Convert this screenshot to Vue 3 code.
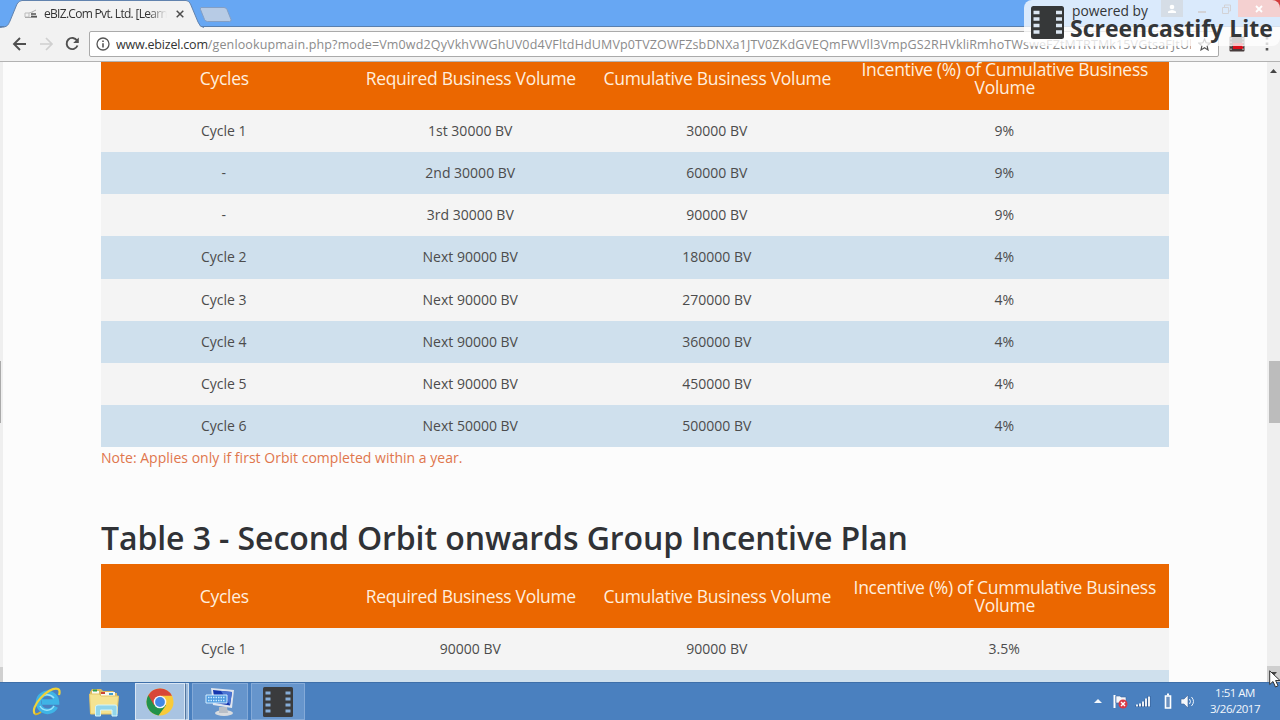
<template>
  <div class="screen">
    <!-- tab strip -->
    <div class="tab-strip">
      <svg class="tab-shape" width="232" height="28" viewBox="0 0 232 28">
        <path d="M0 27.5 C8 27 8 25 10 21 L17 4 Q19 .5 22 .5 H186 Q189 .5 190.500 4 L198 22 Q200 27.500 204 27.500" fill="#f2f2f2" stroke="#6283ae" />
        <path d="M201 7.500 h23 q2 0 3 2 l4 10 q.5 2-1.500 2 h-22 q-2 0-3-2 l-4-10 q-.5-2 .5-2z" fill="#b7cbe5" stroke="#839fc5" />
      </svg>
      <div class="tab">
        <svg width="14" height="12" viewBox="0 0 14 12">
          <path d="M1 5 h4 v4 h-4z M5 5 l3-1 v5" fill="none" stroke="#bbb" />
          <path d="M1 9.500 h12" stroke="#aaa" />
          <path d="M7 6 h5 M7 8.500 h6" stroke="#555" stroke-width="1.300" />
          <path d="M8 4 l4-2" stroke="#aaa" />
        </svg>
        <span class="tab-title">eBIZ.Com Pvt. Ltd. [Learn</span>
        <svg class="tab-close" width="8" height="8" viewBox="0 0 8 8">
          <path d="M.7.7 L7.300 7.300 M7.300.7 L.7 7.300" stroke="#4c4c4c" stroke-width="1.500" />
        </svg>
      </div>
      <div class="window-buttons">
        <span class="user"><svg width="10" height="10" viewBox="0 0 10 10"><circle cx="5" cy="3" r="2.300" fill="#fff" /><path d="M1 9 V7.500 Q5 4.500 9 7.500 V9z" fill="#fff" /></svg></span>
        <span class="win"><svg width="8" height="10" viewBox="0 0 8 10"><path d="M0 8 h8" stroke="#445" stroke-width="2" /></svg></span>
        <span class="win"><svg width="9" height="10" viewBox="0 0 9 10"><path d="M2.500 3 V1 H8.500 V7 H7 M.5 3.500 h6 v6 h-6z" fill="none" stroke="#445" /></svg></span>
        <span class="close"><svg width="8" height="8" viewBox="0 0 8 8"><path d="M1 1 L7 7 M7 1 L1 7" stroke="#fff" stroke-width="1.800" /></svg></span>
      </div>
    </div>

    <!-- toolbar -->
    <div class="toolbar">
      <svg class="nav" width="68" height="16" viewBox="0 0 68 16">
        <path d="M14 8 H2 M8 2 L2 8 L8 14" fill="none" stroke="#505050" stroke-width="1.900" />
        <path d="M28 8 H40 M34 2 L40 8 L34 14" fill="none" stroke="#d0d0d0" stroke-width="1.700" />
        <path d="M65 4.500 A5.600 5.600 0 1 0 65.500 9.500" fill="none" stroke="#505050" stroke-width="1.900" />
        <path d="M66.800 1.500 V7 H61.200z" fill="#505050" />
      </svg>
      <div class="omnibox">
        <svg width="14" height="14" viewBox="0 0 14 14">
          <circle cx="7" cy="7" r="6" fill="none" stroke="#555" stroke-width="1.300" />
          <path d="M7 6.200 V10.500 M7 3.500 V5" stroke="#555" stroke-width="1.600" />
        </svg>
        <span class="url"><b>www.ebizel.com</b>/genlookupmain.php?mode=Vm0wd2QyVkhVWGhUV0d4VFltdHdUMVp0TVZOWFZsbDNXa1JTV0ZKdGVEQmFWVll3VmpGS2RHVkliRmhoTWsweFZtMTRTMk15VGtsaFJtUl</span>
        <svg class="star" width="13" height="13" viewBox="0 0 13 13">
          <path d="M6.500 1 L8.100 4.800 L12.200 5.100 L9.100 7.800 L10 11.900 L6.500 9.700 L3 11.900 L3.900 7.800 L.8 5.100 L4.900 4.800z" fill="none" stroke="#555" stroke-width="1.200" />
        </svg>
      </div>
      <svg class="extension" width="16" height="16" viewBox="0 0 16 16">
        <rect width="15" height="15" x=".5" y=".5" rx="1" fill="#483c3c" />
        <rect x="4" y="7" width="10" height="6" fill="#d90c18" />
        <path d="M2 2 V14 M14 2 V14" stroke="#ddd" stroke-dasharray="1.500 2" />
      </svg>
      <svg class="menu" width="4" height="16" viewBox="0 0 4 16">
        <path d="M.7 1 h2.600 v2.600 h-2.600z M.7 6.500 h2.600 v2.600 h-2.600z M.7 12 h2.600 v2.600 h-2.600z" fill="#555" />
      </svg>
    </div>

    <!-- page -->
    <div class="page">
      <div class="left-edge"><i class="edge-thumb"></i><i class="edge-end"></i></div>
      <div class="content">
        <table class="plan plan-first">
          <thead>
            <tr>
              <th>Cycles</th>
              <th>Required Business Volume</th>
              <th>Cumulative Business Volume</th>
              <th>Incentive (%) of Cumulative Business<br>Volume</th>
            </tr>
          </thead>
          <tbody>
            <tr v-for="(row, i) in firstOrbit" :key="i">
              <td v-for="(cell, j) in row" :key="j">{{ cell }}</td>
            </tr>
          </tbody>
        </table>
        <p class="note">Note: Applies only if first Orbit completed within a year.</p>
        <h2>Table 3 - Second Orbit onwards Group Incentive Plan</h2>
        <table class="plan">
          <thead>
            <tr>
              <th>Cycles</th>
              <th>Required Business Volume</th>
              <th>Cumulative Business Volume</th>
              <th>Incentive (%) of Cummulative Business<br>Volume</th>
            </tr>
          </thead>
          <tbody>
            <tr v-for="(row, i) in secondOrbit" :key="i">
              <td v-for="(cell, j) in row" :key="j">{{ cell }}</td>
            </tr>
          </tbody>
        </table>
      </div>
      <div class="scrollbar">
        <svg width="7" height="4" viewBox="0 0 7 4"><path d="M0 4 L3.500 0 L7 4z" fill="#444" /></svg>
        <i class="thumb"></i>
        <span class="scroll-end"><svg width="7" height="4" viewBox="0 0 7 4"><path d="M0 0 L3.500 4 L7 0z" fill="#444" /></svg></span>
      </div>
    </div>

    <!-- taskbar -->
    <div class="taskbar">
      <span class="task plain">
        <svg width="32" height="32" viewBox="0 0 32 32">
          <path d="M24.500 20.500 A9 9 0 1 1 25.500 16 H11" fill="none" stroke="#3fb4e6" stroke-width="5.500" />
          <path d="M23 20 A8 8 0 0 1 9 20 M9 13 A8.500 8.500 0 0 1 23 12" fill="none" stroke="#9fe4fa" stroke-width="1.500" />
          <path d="M4 28 C-2 22 17 0 27 3 C29 4 29 6 28 9" fill="none" stroke="#f0d238" stroke-width="2.200" />
          <path d="M4 28 Q6 29 10 26" fill="none" stroke="#d9b528" stroke-width="2" />
        </svg>
      </span>
      <span class="task plain">
        <svg width="32" height="30" viewBox="0 0 32 30">
          <path d="M2 5 V26 H29 V6 H27 L25 4 H15 L13 2 H4z" fill="#dcb95e" />
          <path d="M4 4 h7 v4 h-7z M13 5 h14 v4 h-14z" fill="#f9f9f0" />
          <path d="M5 3.500 h4" stroke="#2a9d46" stroke-width="2" />
          <path d="M13 6 h4" stroke="#cb4436" stroke-width="2" />
          <path d="M21 7 h4" stroke="#3f9ed0" stroke-width="2" />
          <path d="M1.500 7 H11 L13 9 H30.500 L29 27 H2.500z" fill="#f5e391" stroke="#e4c568" />
          <path d="M7.500 29 V20 Q7.500 18 10 18 H27 Q29 18 29 20 V29 H24 V23 H12.500 V29z" fill="#91d5eb" stroke="#d5f5fb" />
        </svg>
      </span>
      <span class="task active">
        <svg width="28" height="28" viewBox="0 0 28 28">
          <circle cx="14" cy="14" r="13.500" fill="#f8ca3a" />
          <path d="M14 14 L2.300 7.200 A13.500 13.500 0 0 0 12.500 27.400 L19.900 17.400z" fill="#22924b" />
          <path d="M14 14 L8.100 17.300 L2.300 7.200 A13.500 13.500 0 0 1 25.900 7.700 H14z" fill="#d84738" />
          <circle cx="14" cy="14" r="6.300" fill="#f5f7fa" />
          <circle cx="14" cy="14" r="4.900" fill="#4388e6" />
        </svg>
      </span>
      <i class="stack"></i>
      <span class="task open">
        <svg width="30" height="30" viewBox="0 0 30 30">
          <ellipse cx="19" cy="26" rx="9" ry="3" fill="#d9dcdf" />
          <path d="M14 20 h8 l1 6 h-9z" fill="#b9bfc7" />
          <path d="M6 1 L29 3 L27 21 L8 18z" fill="#dfe5ee" />
          <path d="M8 3 L27 5 L25 18.500 L10 16z" fill="#1537ae" />
          <path d="M16 4 L27 5 L25 18z" fill="#4b75d3" />
          <path d="M1 8 H22 V16 H1z" fill="#4d9ae0" stroke="#d3edff" />
          <path d="M3 10.500 H20 M3 13.500 H20" stroke="#c9eaff" stroke-width="1.400" stroke-dasharray="1.500 1" />
        </svg>
      </span>
      <span class="task open film">
        <svg width="30" height="30" viewBox="0 0 30 30">
          <rect width="30" height="30" rx="1.500" fill="#3a3b3d" />
          <path d="M2.500 6 h5 M2.500 12 h5 M2.500 18 h5 M2.500 24 h5 M22.500 6 h5 M22.500 12 h5 M22.500 18 h5 M22.500 24 h5" stroke="#86add8" stroke-width="3" />
        </svg>
      </span>
      <div class="tray">
        <svg width="102" height="18" viewBox="0 0 102 18">
          <path d="M0 11 L4 7 L8 11z" fill="#f4f8fc" />
          <path d="M20.500 3 V16" stroke="#fff" stroke-width="2" />
          <path d="M22 4 h4 l1 1 h5 v7 h-5 l-1-1 h-4z" fill="#f5f7fa" stroke="#40659b" stroke-width=".6" />
          <circle cx="29" cy="12" r="4.500" fill="#da3945" />
          <path d="M27 10 l4 4 M31 10 l-4 4" stroke="#fff" stroke-width="1.400" />
          <path d="M43 15 v-2 M46 15 v-3 M49 15 v-5 M52 15 v-8 M55 15 v-11" stroke="#315b94" stroke-width="3" />
          <path d="M43 14.500 v-2 M46 14.500 v-3 M49 14.500 v-5 M52 14.500 v-8 M55 14.500 v-10" stroke="#fff" stroke-width="1.800" />
          <path d="M71.500 4 h5 v12 h-5z" fill="#6c91bf" stroke="#fff" stroke-width="1.600" />
          <path d="M73 2.500 h2" stroke="#fff" stroke-width="2" />
          <path d="M87 7 h3 l4-4 v13 l-4-4 h-3z" fill="#f6f8fb" stroke="#3c6297" stroke-width=".6" />
          <path d="M95.500 7 q2 2.500 0 5 M97.500 5 q4 4.500 0 9" fill="none" stroke="#eef4fb" />
        </svg>
        <div class="clock"><span>1:51 AM</span><span>3/26/2017</span></div>
      </div>
    </div>

    <div class="watermark">
      <svg width="33" height="33" viewBox="0 0 33 33">
        <rect width="33" height="33" rx="2.500" fill="#363839" />
        <path d="M2.500 6.500 h6 M2.500 13 h6 M2.500 19.500 h6 M2.500 26 h6 M25 6.500 h6 M25 13 h6 M25 19.500 h6 M25 26 h6" stroke="#dbe6f2" stroke-width="3.500" />
      </svg>
      <div class="mark-text">
        <span class="powered">powered by</span>
        <span class="brand">Screencastify Lite</span>
      </div>
    </div>

    <svg class="cursor" width="13" height="18" viewBox="0 0 13 18">
      <path d="M.7.8 V14.500 L4 11.500 L6.500 17 L9 15.800 L6.600 10.500 H11z" fill="#fff" stroke="#333" />
    </svg>
  </div>
</template>

<script setup>
const firstOrbit = [
  ['Cycle 1', '1st 30000 BV', '30000 BV', '9%'],
  ['-', '2nd 30000 BV', '60000 BV', '9%'],
  ['-', '3rd 30000 BV', '90000 BV', '9%'],
  ['Cycle 2', 'Next 90000 BV', '180000 BV', '4%'],
  ['Cycle 3', 'Next 90000 BV', '270000 BV', '4%'],
  ['Cycle 4', 'Next 90000 BV', '360000 BV', '4%'],
  ['Cycle 5', 'Next 90000 BV', '450000 BV', '4%'],
  ['Cycle 6', 'Next 50000 BV', '500000 BV', '4%']
]

const secondOrbit = [
  ['Cycle 1', '90000 BV', '90000 BV', '3.5%'],
  ['', '', '', '']
]
</script>

<style>
body {
  margin: 0;
  overflow: hidden;
}
</style>

<style scoped>
.screen {
  position: relative;
  display: flex;
  flex-direction: column;
  width: 1280px;
  height: 720px;
  overflow: hidden;
  background: #fcfcfc;
  font-family: 'Open Sans', 'Noto Sans', sans-serif;
}

svg {
  display: block;
  flex-shrink: 0;
}

/* tab strip */
.tab-strip {
  position: relative;
  display: flex;
  justify-content: space-between;
  height: 27px;
  flex-shrink: 0;
  background: #67a7f3;
  box-shadow: inset 0 -1px #587fae;
}

.tab-shape {
  position: absolute;
  left: 0;
  top: 0;
}

.tab {
  position: relative;
  display: flex;
  align-items: center;
  height: 27px;
  padding-left: 24px;
}

.tab-title {
  width: 123px;
  margin-left: 6px;
  overflow: hidden;
  white-space: nowrap;
  font-size: 12px;
  letter-spacing: -0.7px;
  color: #333;
  mask-image: linear-gradient(90deg, #000 85%, transparent);
}

.tab-close {
  margin-left: 9px;
}

.window-buttons {
  display: flex;
  height: 17px;
}

.window-buttons span {
  display: flex;
  align-items: center;
  justify-content: center;
}

.user {
  width: 22px;
  background: #4f7396;
  margin-right: 7px;
}

.win {
  width: 24px;
}

.close {
  width: 42px;
  background: #d23c3c;
}

/* toolbar */
.toolbar {
  display: flex;
  align-items: center;
  height: 35px;
  flex-shrink: 0;
  box-sizing: border-box;
  background: #f2f2f2;
  border-bottom: 1px solid #b2b2b2;
}

.nav {
  margin-left: 12px;
}

.omnibox {
  display: flex;
  align-items: center;
  box-sizing: border-box;
  width: 1130px;
  height: 26px;
  margin-left: 9px;
  padding-left: 6px;
  border: 1px solid #aaa;
  border-radius: 2px;
  background: #fff;
}

.url {
  width: 1075px;
  margin-left: 6px;
  overflow: hidden;
  white-space: nowrap;
  font-size: 12.500px;
  letter-spacing: 0.145px;
  color: #8b8b8b;
}

.url b {
  font-weight: 400;
  letter-spacing: -0.2px;
  color: #333;
}

.star {
  margin-left: 7px;
}

.extension {
  margin-left: 10px;
}

.menu {
  margin-left: 20px;
}

/* page */
.page {
  display: flex;
  height: 620px;
  overflow: hidden;
}

.left-edge {
  width: 3px;
  flex-shrink: 0;
  background: #efefef;
}

.edge-thumb {
  display: block;
  width: 1px;
  height: 62px;
  margin-top: 299px;
  background: #aaa;
}

.edge-end {
  display: block;
  height: 16px;
  margin-top: 244px;
  background: #d0d0d0;
}

.content {
  width: 1068px;
  padding: 0 98px;
}

.plan {
  width: 1068px;
  table-layout: fixed;
  border-collapse: collapse;
  border-spacing: 0;
}

.plan-first {
  margin-top: -16px;
}

.plan th {
  height: 64px;
  padding: 0 0 1px;
  box-sizing: border-box;
  background: #eb6700;
  color: #ffeede;
  font-size: 17.500px;
  font-weight: 400;
  line-height: 18px;
  letter-spacing: -0.3px;
}

.plan th:nth-child(-n+3) {
  width: 246.500px;
}

.plan td {
  height: 42.140px;
  padding: 0 1px 0 0;
  box-sizing: border-box;
  text-align: center;
  color: #4c4c4c;
  font-size: 14px;
  line-height: 20px;
}

.plan tbody tr {
  background: #f4f4f4;
}

.plan tbody tr:nth-child(even) {
  background: #cfe0ed;
}

.note {
  margin: 1px 0 0;
  font-size: 14px;
  line-height: 20px;
  letter-spacing: 0.02px;
  color: #e0764c;
}

h2 {
  height: 51px;
  margin: 45px 0 0;
  font-size: 32px;
  font-weight: 600;
  line-height: 49px;
  letter-spacing: -0.09px;
  color: #303236;
  white-space: nowrap;
}

.scrollbar {
  display: flex;
  flex-direction: column;
  align-items: center;
  box-sizing: border-box;
  width: 13px;
  flex-shrink: 0;
  padding-top: 7px;
  background: #efefef;
}

.thumb {
  width: 11px;
  height: 62px;
  margin: 288px 0 0 2px;
  background: #bcbcbc;
}

.scroll-end {
  display: flex;
  justify-content: center;
  width: 13px;
  height: 16px;
  margin-top: 243px;
  padding-top: 6px;
  box-sizing: border-box;
  background: #cfcfcf;
}

/* taskbar */
.taskbar {
  display: flex;
  height: 38px;
  flex-shrink: 0;
  padding-left: 18px;
  background: #4a80bf;
  box-shadow: inset 0 1px #3e6fa9;
}

.task {
  display: flex;
  align-items: center;
  justify-content: center;
  box-sizing: border-box;
  width: 56px;
  height: 37px;
  margin-top: 1px;
}

.plain {
  width: 57px;
}

.plain + .active {
  width: 50px;
  margin-left: 3px;
}

.active {
  background: #a9c4e2;
  border: 1px solid #d9e6f4;
}

.stack {
  width: 4px;
  height: 37px;
  margin: 1px 3px 0 0;
  border: 1px solid #d0e0f0;
  border-left-color: #54779f;
  box-sizing: border-box;
  background: #9dbbdc;
}

.open {
  background: #6695cc;
  border: 1px solid #84aad8;
}

.film {
  width: 54px;
  margin-left: 3px;
}

.tray {
  display: flex;
  align-items: center;
  margin-left: auto;
  padding-right: 19px;
}

.clock {
  display: flex;
  flex-direction: column;
  align-items: center;
  width: 52px;
  margin-left: 13px;
  font-size: 11.500px;
  line-height: 16px;
  letter-spacing: -0.5px;
  white-space: nowrap;
  color: #f2f7fc;
}

/* overlays */
.watermark {
  position: absolute;
  top: 0;
  right: 0;
  display: flex;
  box-sizing: border-box;
  width: 256px;
  height: 46px;
  padding: 6px 0 0 7px;
  border-radius: 8px;
  background: rgba(255, 255, 255, 0.76);
}

.mark-text {
  display: flex;
  flex-direction: column;
  margin: -5px 0 0 6px;
  color: #343638;
  white-space: nowrap;
}

.powered {
  padding-left: 2px;
  font-size: 13.800px;
  line-height: 20px;
}

.brand {
  font-size: 23px;
  font-weight: 700;
  line-height: 15px;
}

.cursor {
  position: absolute;
  left: 1269px;
  top: 670px;
}
</style>
